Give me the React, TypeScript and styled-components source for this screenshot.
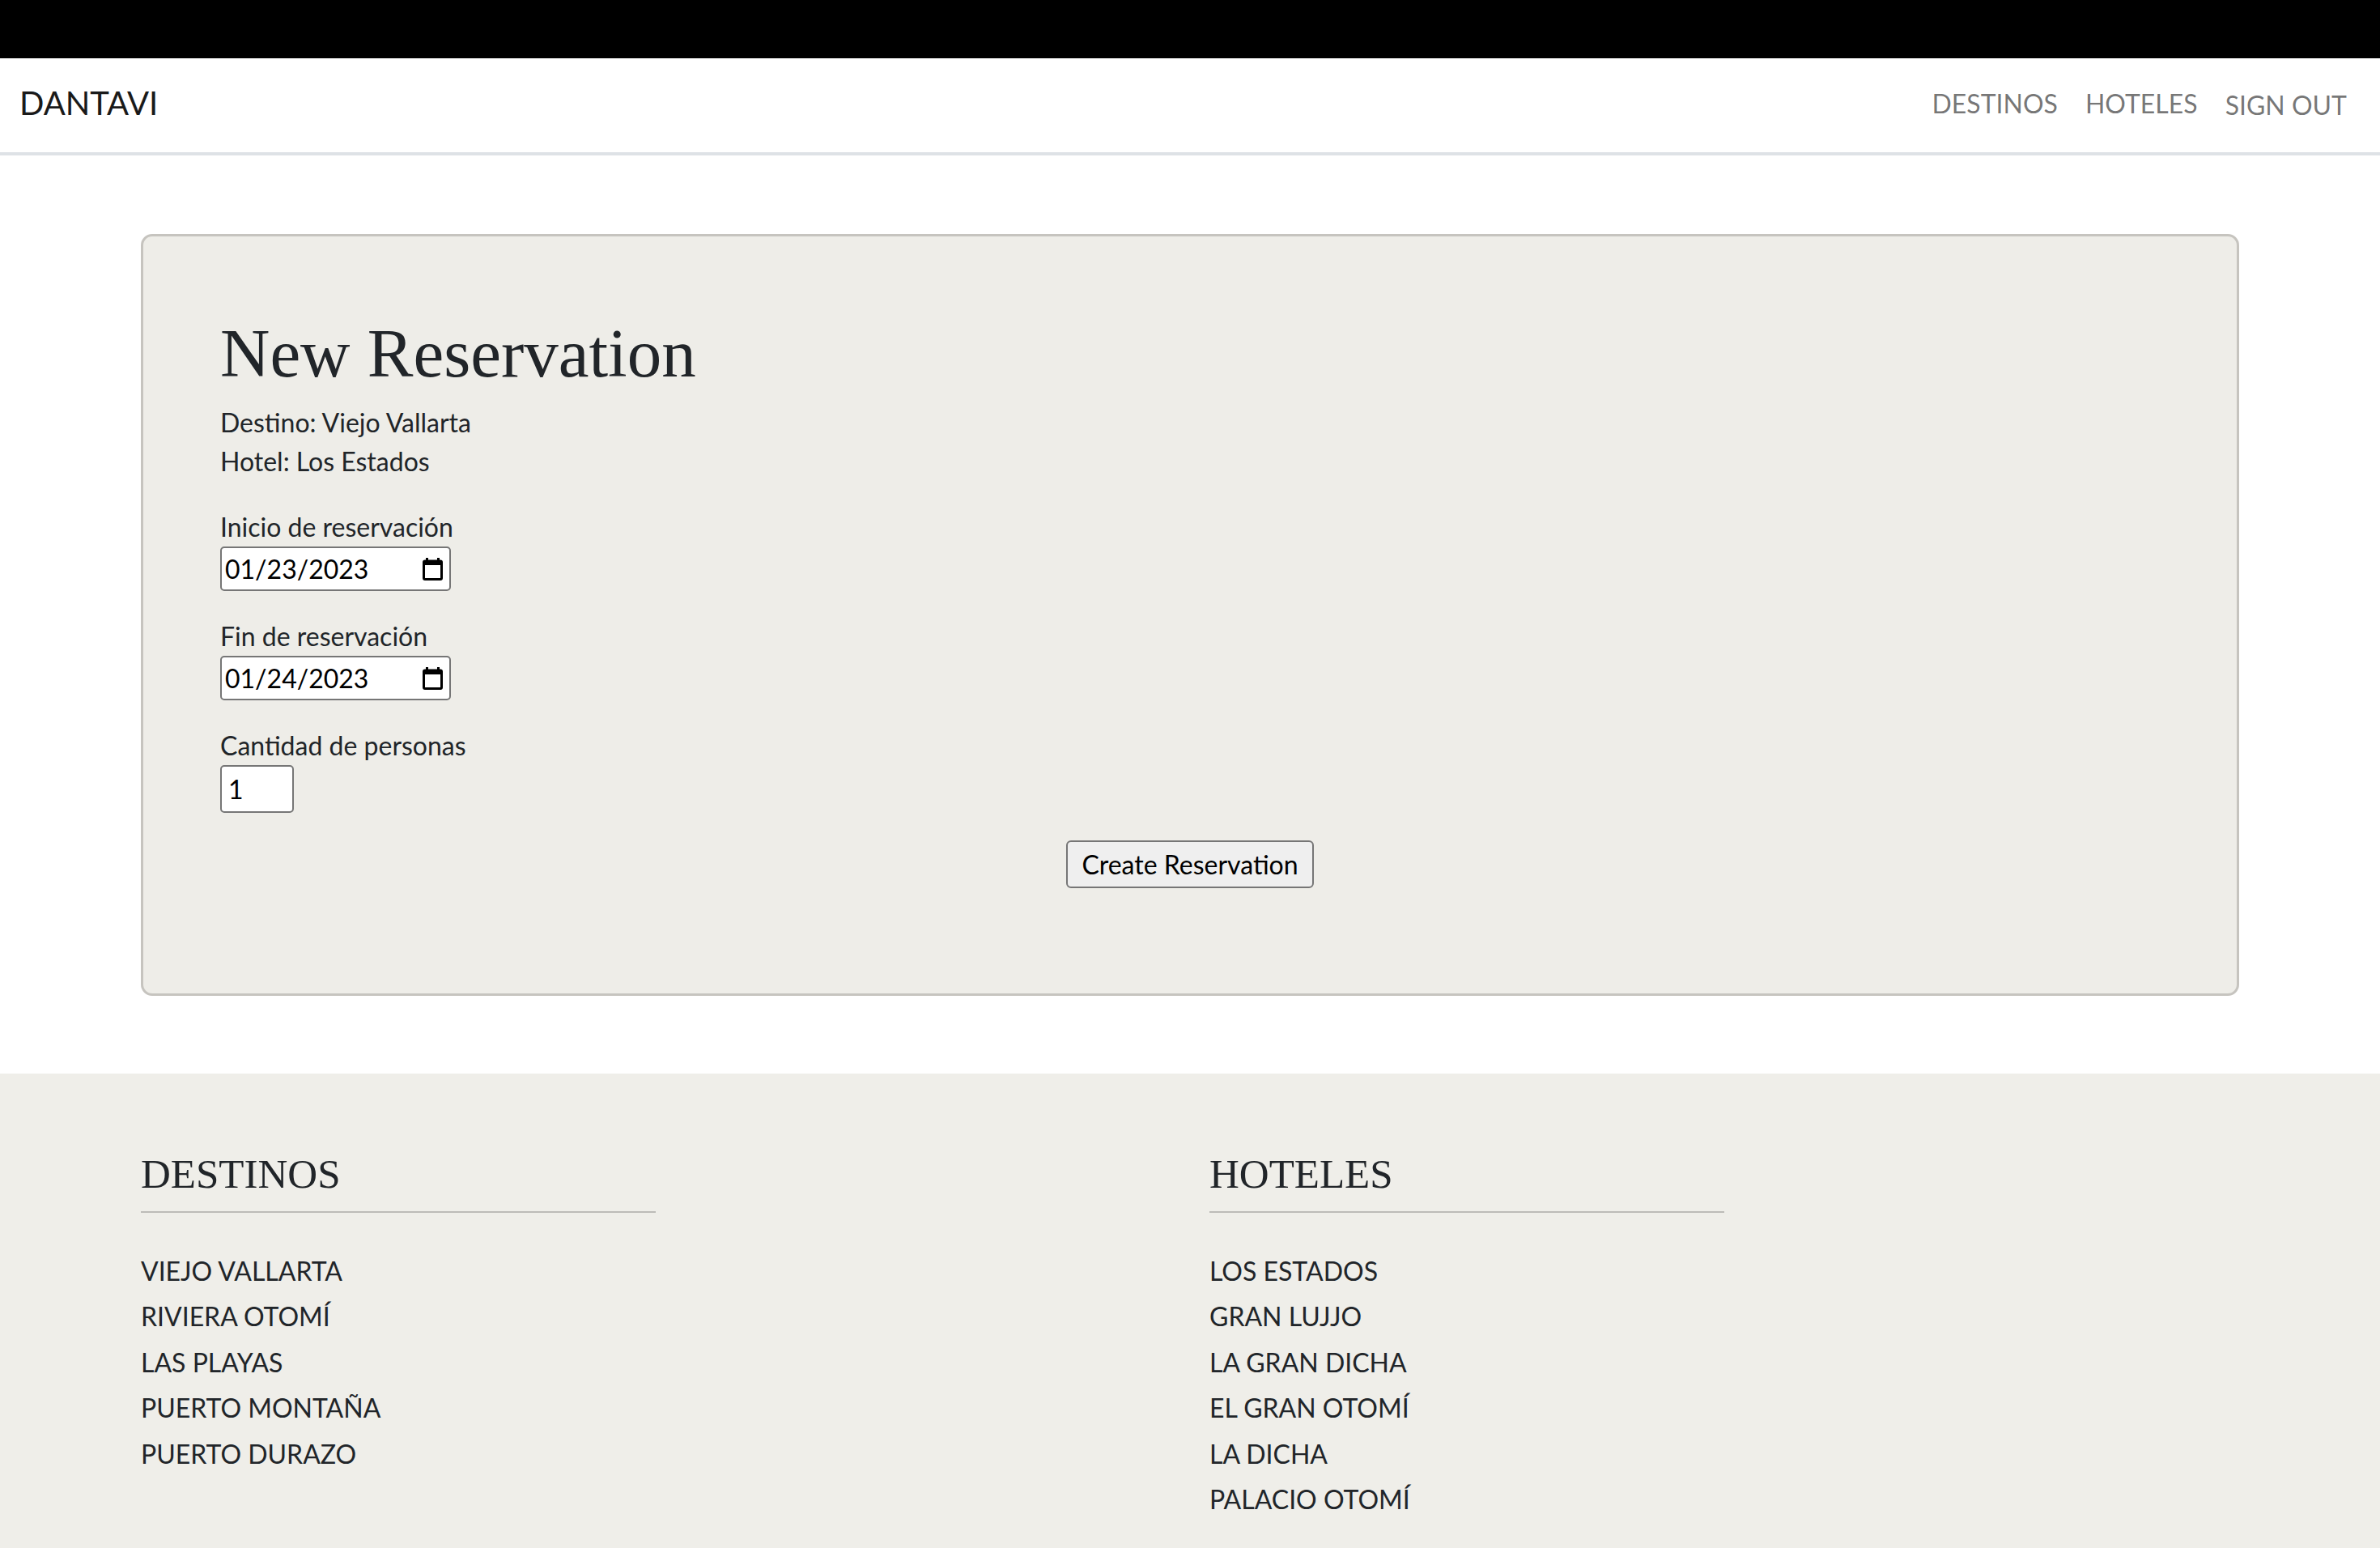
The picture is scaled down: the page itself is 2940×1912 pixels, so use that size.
import React from "react";
import styled, { createGlobalStyle } from "styled-components";

const GlobalStyle = createGlobalStyle`
  html, body {
    margin: 0;
    padding: 0;
    background: #ffffff;
  }
  body {
    font-family: Lato, "Noto Sans", "Liberation Sans", sans-serif;
    color: #212529;
  }
  * { box-sizing: border-box; }
`;

const TopBar = styled.div`
  height: 72px;
  background: #000000;
`;

const Navbar = styled.nav`
  height: 120px;
  border-bottom: 4px solid #dee2e6;
  display: flex;
  align-items: center;
  justify-content: space-between;
  padding: 0 41px 6px 24px;
  background: #ffffff;
`;

const Brand = styled.a`
  font-size: 40px;
  color: #1a1a1a;
  text-decoration: none;
`;

const NavLinks = styled.div`
  display: flex;
  align-items: center;
  gap: 34px;
`;

const NavLink = styled.a<{ $offset?: number }>`
  font-size: 32px;
  color: rgba(0, 0, 0, 0.55);
  text-decoration: none;
  padding-top: ${(p) => p.$offset ?? 0}px;
`;

const Main = styled.main`
  padding: 97px 0 96px;
`;

const Container = styled.div`
  width: 2592px;
  margin: 0 auto;
`;

const Card = styled.section`
  background: #eeede8;
  border: 3px solid #c6c4bf;
  border-radius: 14px;
  padding: 93px 95px 130px;
  display: flex;
  flex-direction: column;
`;

const Title = styled.h1`
  font-family: "Liberation Serif", "Times New Roman", serif;
  font-weight: 400;
  font-size: 85px;
  line-height: 102px;
  margin: 0 0 11px;
  color: #212529;
`;

const InfoBlock = styled.div`
  font-size: 32px;
  line-height: 48px;
  margin-bottom: 33px;
`;

const Field = styled.div<{ $gap?: number }>`
  display: flex;
  flex-direction: column;
  align-items: flex-start;
  margin-bottom: ${(p) => p.$gap ?? 32}px;
`;

const Label = styled.label`
  font-size: 32px;
  line-height: 48px;
`;

const DateBox = styled.div`
  width: 285px;
  height: 55px;
  border: 2px solid #767676;
  border-radius: 5px;
  background: #ffffff;
  display: flex;
  align-items: center;
  justify-content: space-between;
  padding: 0 8px 0 4px;
  font-size: 32px;
  color: #000000;
`;

const NumberInput = styled.input`
  width: 91px;
  height: 59px;
  border: 2px solid #767676;
  border-radius: 5px;
  background: #ffffff;
  font-family: inherit;
  font-size: 32px;
  color: #000000;
  padding: 0 8px;
  outline: none;
`;

const ButtonRow = styled.div`
  display: flex;
  justify-content: center;
`;

const CreateButton = styled.button`
  font-family: inherit;
  font-size: 32px;
  height: 59px;
  padding: 0 17px;
  border: 2px solid #767676;
  border-radius: 6px;
  background: #efefef;
  color: #000000;
`;

const Footer = styled.footer`
  background: #efeee9;
  padding: 94px 0 48px;
`;

const FooterGrid = styled.div`
  display: grid;
  grid-template-columns: 636px 636px;
  column-gap: 684px;
`;

const FooterHeading = styled.h3`
  font-family: "Liberation Serif", "Times New Roman", serif;
  font-weight: 400;
  font-size: 51px;
  line-height: 61px;
  margin: 0;
  padding-bottom: 15px;
  border-bottom: 2px solid #bdbcb8;
  color: #212529;
`;

const FooterList = styled.ul`
  list-style: none;
  padding: 0;
  margin: 44px 0 0;
`;

const FooterItem = styled.li`
  font-size: 32px;
  line-height: 56.4px;
  text-transform: uppercase;
  color: #212529;
`;

const CalendarIcon = () => (
  <svg width="25" height="28" viewBox="0 0 25 28" aria-hidden="true">
    <rect x="4" y="0" width="3" height="5" fill="#000" />
    <rect x="18" y="0" width="3" height="5" fill="#000" />
    <rect x="1.5" y="4" width="22" height="22.5" rx="1.5" fill="none" stroke="#000" strokeWidth="3" />
    <rect x="1.5" y="4" width="22" height="5" fill="#000" />
  </svg>
);

const destinos = ["Viejo Vallarta", "Riviera Otomí", "Las Playas", "Puerto Montaña", "Puerto Durazo"];
const hoteles = ["Los Estados", "Gran Lujjo", "La Gran Dicha", "El Gran Otomí", "La Dicha", "Palacio Otomí"];

export default function App() {
  return (
    <>
      <GlobalStyle />
      <TopBar />
      <Navbar>
        <Brand href="#">DANTAVI</Brand>
        <NavLinks>
          <NavLink href="#">DESTINOS</NavLink>
          <NavLink href="#">HOTELES</NavLink>
          <NavLink href="#" $offset={4}>SIGN OUT</NavLink>
        </NavLinks>
      </Navbar>
      <Main>
        <Container>
          <Card>
            <Title>New Reservation</Title>
            <InfoBlock>
              <div>Destino: Viejo Vallarta</div>
              <div>Hotel: Los Estados</div>
            </InfoBlock>
            <Field>
              <Label>Inicio de reservación</Label>
              <DateBox>
                <span>01/23/2023</span>
                <CalendarIcon />
              </DateBox>
            </Field>
            <Field>
              <Label>Fin de reservación</Label>
              <DateBox>
                <span>01/24/2023</span>
                <CalendarIcon />
              </DateBox>
            </Field>
            <Field $gap={34}>
              <Label htmlFor="personas">Cantidad de personas</Label>
              <NumberInput id="personas" type="text" defaultValue="1" />
            </Field>
            <ButtonRow>
              <CreateButton type="button">Create Reservation</CreateButton>
            </ButtonRow>
          </Card>
        </Container>
      </Main>
      <Footer>
        <Container>
          <FooterGrid>
            <div>
              <FooterHeading>DESTINOS</FooterHeading>
              <FooterList>
                {destinos.map((d) => (
                  <FooterItem key={d}>{d}</FooterItem>
                ))}
              </FooterList>
            </div>
            <div>
              <FooterHeading>HOTELES</FooterHeading>
              <FooterList>
                {hoteles.map((h) => (
                  <FooterItem key={h}>{h}</FooterItem>
                ))}
              </FooterList>
            </div>
          </FooterGrid>
        </Container>
      </Footer>
    </>
  );
}
